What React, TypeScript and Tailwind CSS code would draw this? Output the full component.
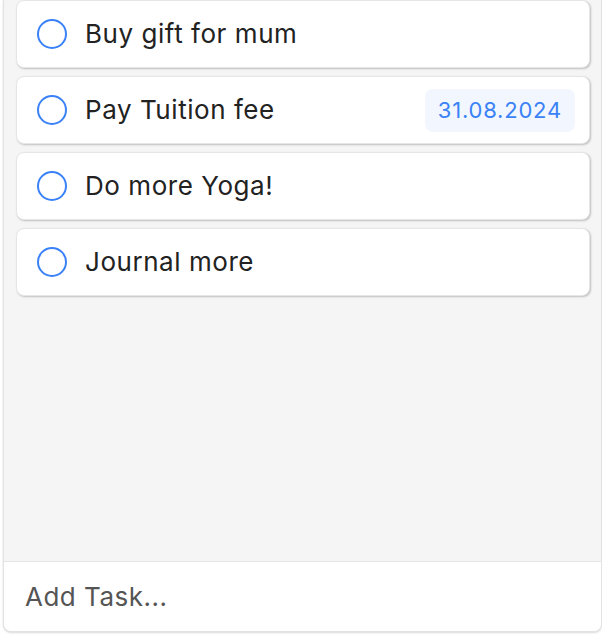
import React from "react"

type Task = {
  id: number
  title: string
  due?: string
}

const tasks: Task[] = [
  { id: 1, title: "Buy gift for mum" },
  { id: 2, title: "Pay Tuition fee", due: "31.08.2024" },
  { id: 3, title: "Do more Yoga!" },
  { id: 4, title: "Journal more" },
]

const font = { fontFamily: '"Inter", "Noto Sans", sans-serif' }

function TaskCard({ task }: { task: Task }) {
  return (
    <div className="flex h-[68px] items-center rounded-lg border border-[#e6e6e6] bg-white pl-5 pr-[14px] shadow-[1px_1px_2px_rgba(0,0,0,0.22)]">
      <span className="h-[30px] w-[30px] shrink-0 rounded-full border-2 border-[#3b82f6]" />
      <span
        className="ml-[18px] flex-1 text-[26px] leading-none tracking-[0.55px] text-[#222]"
        style={font}
      >
        {task.title}
      </span>
      {task.due && (
        <span
          className="flex h-[43px] items-center rounded-lg bg-[#f2f7ff] px-[13px] text-[22px] tracking-[0.8px] text-[#3b82f6]"
          style={font}
        >
          {task.due}
        </span>
      )}
    </div>
  )
}

export default function App() {
  return (
    <div className="h-[642px] w-[602px] bg-white">
      <div className="ml-[3px] flex h-[632px] w-[599px] flex-col overflow-hidden rounded-b-lg border-x border-b border-[#e2e2e2] bg-[#f5f5f5] shadow-[0_1px_2px_rgba(0,0,0,0.15)]">
        <div className="flex flex-1 flex-col gap-2 pl-3 pr-[11px]">
          {tasks.map((task) => (
            <TaskCard key={task.id} task={task} />
          ))}
        </div>
        <div className="flex h-[70px] items-center border-t border-[#e4e4e4] bg-white px-[21px]">
          <span className="text-[26px] tracking-[0.5px] text-[#555]" style={font}>
            Add Task...
          </span>
        </div>
      </div>
    </div>
  )
}
